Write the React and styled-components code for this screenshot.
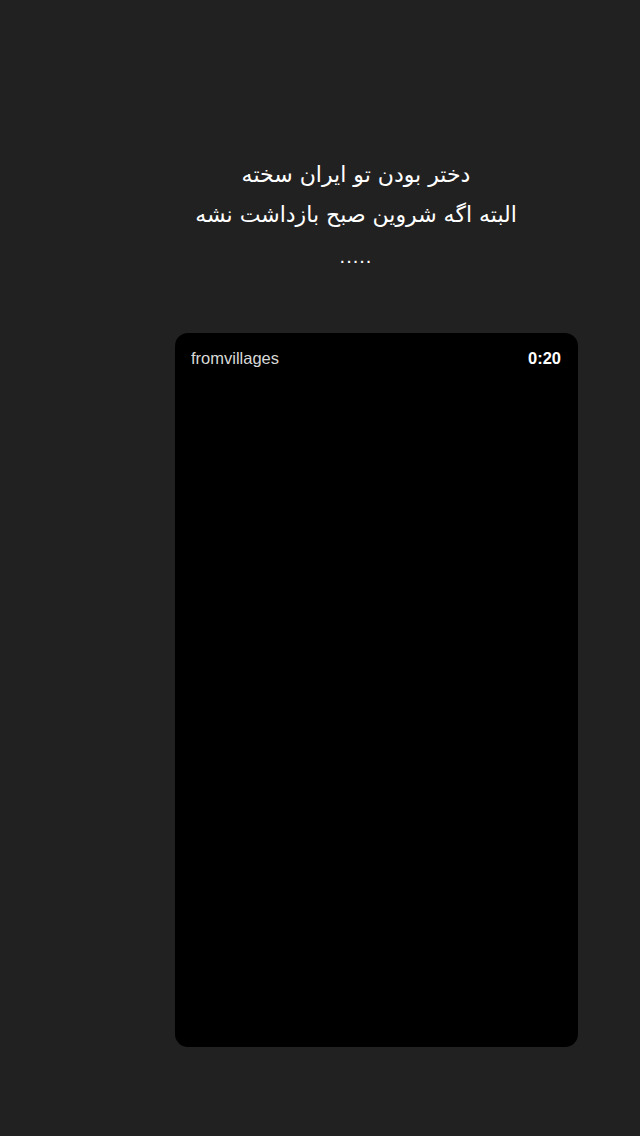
import React from "react";
import styled, { createGlobalStyle } from "styled-components";

const GlobalStyle = createGlobalStyle`
  html, body {
    margin: 0;
    padding: 0;
    background: #212121;
  }
  body {
    font-family: "Liberation Sans", Arial, sans-serif;
  }
`;

const Page = styled.div`
  width: 640px;
  height: 1136px;
  background: #212121;
  display: flex;
  flex-direction: column;
  overflow: hidden;
`;

const Caption = styled.div`
  margin-top: 155px;
  padding-left: 72px;
  display: flex;
  flex-direction: column;
  align-items: center;
  color: #ffffff;
  font-family: "DejaVu Sans", "Noto Sans", sans-serif;
  font-size: 22px;
  line-height: 40px;
  direction: rtl;
  p {
    margin: 0;
  }
  .dots {
    margin-top: 6px;
    font-family: "Liberation Sans", sans-serif;
    font-size: 20px;
    line-height: 30px;
    letter-spacing: 1px;
  }
`;

const Card = styled.div`
  margin-top: 62px;
  margin-left: 175px;
  width: 403px;
  height: 714px;
  background: #000;
  border-radius: 13px;
  box-sizing: border-box;
  padding: 16px 16px;
`;

const CardHeader = styled.div`
  display: flex;
  justify-content: space-between;
  align-items: center;
  font-family: "Liberation Sans", Arial, sans-serif;
  font-size: 16.5px;
`;

const Name = styled.span`
  color: #d8d8d8;
`;

const Time = styled.span`
  color: #fff;
  font-weight: bold;
  margin-right: 1px;
`;

export default function App() {
  return (
    <>
      <GlobalStyle />
      <Page>
        <Caption>
          <p>دختر بودن تو ایران سخته</p>
          <p>البته اگه شروین صبح بازداشت نشه</p>
          <p className="dots">.....</p>
        </Caption>
        <Card>
          <CardHeader>
            <Name>fromvillages</Name>
            <Time>0:20</Time>
          </CardHeader>
        </Card>
      </Page>
    </>
  );
}
